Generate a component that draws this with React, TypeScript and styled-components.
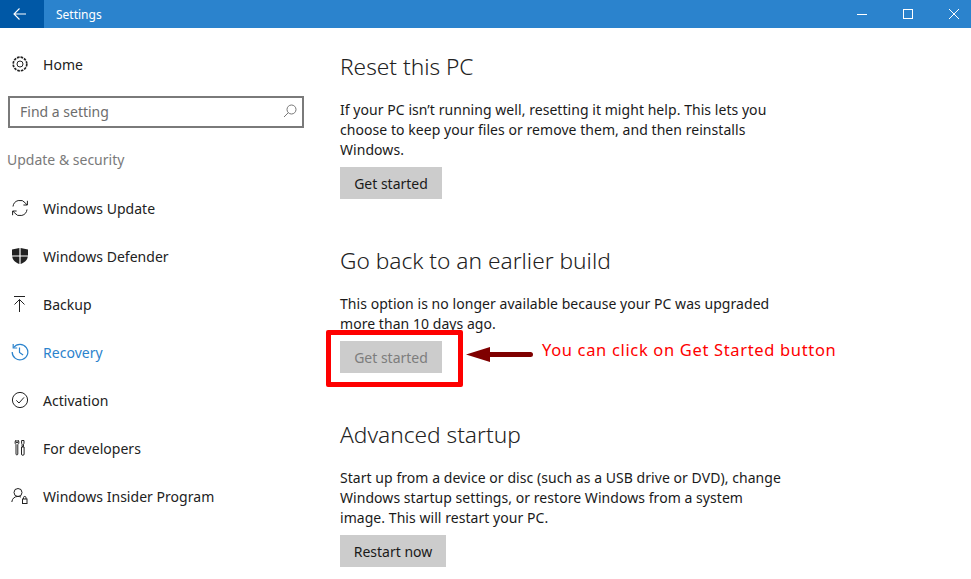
import React from "react";
import styled, { createGlobalStyle } from "styled-components";

const Global = createGlobalStyle`
  html, body { margin: 0; padding: 0; background: #fff; }
  body { font-family: "Noto Sans", "Open Sans", "Liberation Sans", sans-serif; color: #000; }
`;

const Page = styled.div`
  position: relative;
  width: 971px;
  height: 579px;
  overflow: hidden;
  background: #fff;
`;
const TitleBar = styled.header`
  display: flex;
  align-items: center;
  height: 28px;
  margin-right: -6px;
  background: #2b83cd;
  color: #fff;
`;
const BackButton = styled.div`
  box-sizing: border-box;
  width: 44px;
  height: 28px;
  padding: 0 4px 1px 0;
  background: #0058a6;
  display: flex;
  align-items: center;
  justify-content: center;
  margin-right: 12px;
`;
const Title = styled.span`
  font-size: 12px;
  flex: 1;
`;
const WindowButton = styled.div`
  width: 46px;
  height: 28px;
  display: flex;
  align-items: center;
  justify-content: center;
`;
const Body = styled.div`
  display: grid;
  grid-template-columns: 340px 1fr;
`;
const Sidebar = styled.nav`
  display: flex;
  flex-direction: column;
`;
const NavRow = styled.div<{ $active?: boolean }>`
  display: flex;
  align-items: center;
  height: 48px;
  padding-left: 11px;
  gap: 14px;
  font-size: 14px;
  letter-spacing: 0.03px;
  color: ${(p) => (p.$active ? "#2b83cd" : "#222")};
`;
const IconSlot = styled.svg`
  width: 18px;
  height: 18px;
  flex: none;
  fill: none;
  stroke: currentColor;
`;
const HomeRow = styled(NavRow)`
  margin-top: 12px;
`;
const SearchBox = styled.div`
  box-sizing: border-box;
  width: 296px;
  height: 32px;
  margin: 8px 0 0 8px;
  border: 2px solid #7a7a7a;
  display: flex;
  align-items: center;
  justify-content: space-between;
  padding: 0 5px 2px 10px;
  font-size: 14px;
  color: #6d6d6d;
`;
const SectionLabel = styled.div`
  margin: 23px 0 15px 7px;
  height: 18px;
  line-height: 18px;
  font-size: 14px;
  color: #7a7a7a;
`;
const Main = styled.main`
  display: flex;
  flex-direction: column;
`;
const Section = styled.section`
  display: flex;
  flex-direction: column;
  align-items: flex-start;
`;
const Heading = styled.h2<{ $top: number }>`
  margin: ${(p) => p.$top}px 0 14px;
  height: 38px;
  line-height: 38px;
  font-size: 22.7px;
  font-weight: 300;
  color: #222;
`;
const Para = styled.p`
  margin: 0 0 7px;
  font-size: 14px;
  line-height: 20px;
  letter-spacing: 0.05px;
  color: #1a1a1a;
`;
const Button = styled.div<{ $w: number; $disabled?: boolean }>`
  width: ${(p) => p.$w}px;
  height: 32px;
  display: flex;
  align-items: center;
  justify-content: center;
  background: #cccccc;
  font-size: 14px;
  color: ${(p) => (p.$disabled ? "#7d7d7d" : "#1a1a1a")};
`;
const RedBox = styled.div`
  position: absolute;
  box-sizing: border-box;
  left: 326px;
  top: 330px;
  width: 137px;
  height: 57px;
  border: 5px solid #fe0000;
  border-radius: 2px;
`;
const Arrow = styled.svg`
  position: absolute;
  left: 466px;
  top: 347px;
  width: 67px;
  height: 15px;
`;
const Note = styled.div`
  position: absolute;
  left: 542px;
  top: 338px;
  font-size: 16.5px;
  line-height: 24px;
  letter-spacing: 0.66px;
  color: #fe0000;
  white-space: nowrap;
`;

const Gear = () => (
  <IconSlot viewBox="0 0 18 18" strokeWidth="1">
    <circle cx="9" cy="9" r="3" />
    <circle cx="9" cy="9" r="6.800" strokeDasharray="2.600 1" strokeWidth="1.700" />
  </IconSlot>
);
const Sync = () => (
  <IconSlot viewBox="0 0 18 18" strokeWidth="1">
    <path d="M2 7.500A7 7 0 0 1 14.600 4.200L16 6" />
    <path d="M16.400 1.800V6h-4" />
    <path d="M16 10.500A7 7 0 0 1 3.400 13.800L2 12" />
    <path d="M1.600 16.200V12h4" />
  </IconSlot>
);
const Shield = () => (
  <IconSlot viewBox="0 0 18 18" stroke="none">
    <path fill="currentColor" stroke="none" d="M1 2.500 8.400 1v7.400H1zM9.600 1 17 2.500v5.900H9.600zM1.200 9.600h7.200V17C4.600 15.800 1.800 13.500 1.200 9.600zM9.600 9.600h7.200c-.6 3.900-3.400 6.200-7.200 7.400z" />
  </IconSlot>
);
const Upload = () => (
  <IconSlot viewBox="0 0 18 18" strokeWidth="1">
    <path d="M3 1.500h11" />
    <path d="M8.500 17V4.500M3.500 9.500l5-5 5 5" />
  </IconSlot>
);
const History = () => (
  <IconSlot viewBox="0 0 18 18" strokeWidth="1.200">
    <path d="M2.700 4.500A7.800 7.800 0 1 1 1.200 9" />
    <path d="M2.200 1v4h4" />
    <path d="M8.500 4.500V9.500l3.600 2.400" />
  </IconSlot>
);
const CheckCircle = () => (
  <IconSlot viewBox="0 0 18 18" strokeWidth="1">
    <circle cx="9" cy="9" r="7.600" />
    <path d="M5.300 9.400 8 12l5-5.600" />
  </IconSlot>
);
const Tools = () => (
  <IconSlot viewBox="0 0 18 18" strokeWidth="1">
    <path d="M5 1.200v2.400h2V1.200C8.200 2 8.200 5 6.800 5.600V15a.9.9 0 0 1-1.800 0V5.600C3.800 5 3.800 2 5 1.200z" />
    <path d="M10.600 1.500h2.400v2.800l-.5.900v2.300h-1.400V5.200l-.5-.9zM10.500 8h2.600v7a1.300 1.300 0 0 1-2.600 0z" />
  </IconSlot>
);
const Insider = () => (
  <IconSlot viewBox="0 0 18 18" strokeWidth="1">
    <circle cx="7" cy="5.500" r="4" />
    <path d="M.8 15c.4-3.500 2.800-5.600 6.200-5.600 1.200 0 2.200.3 3 .7" />
    <rect x="11.500" y="12" width="4.500" height="4.500" />
    <path d="M12.500 12v-1.300a1.200 1.200 0 0 1 2.500 0V12" />
  </IconSlot>
);

const items: { label: string; icon: React.ReactNode; active?: boolean }[] = [
  { label: "Windows Update", icon: <Sync /> },
  { label: "Windows Defender", icon: <Shield /> },
  { label: "Backup", icon: <Upload /> },
  { label: "Recovery", icon: <History />, active: true },
  { label: "Activation", icon: <CheckCircle /> },
  { label: "For developers", icon: <Tools /> },
  { label: "Windows Insider Program", icon: <Insider /> },
];

export default function App() {
  return (
    <Page>
      <Global />
      <TitleBar>
        <BackButton>
          <svg width="14" height="14" viewBox="0 0 14 14" fill="none" stroke="#fff" strokeWidth="1.100">
            <path d="M13 7H1M6.500 1.500 1 7l5.500 5.500" />
          </svg>
        </BackButton>
        <Title>Settings</Title>
        <WindowButton>
          <svg width="10" height="10" viewBox="0 0 10 10" stroke="#fff" strokeWidth="1"><path d="M0 5.500h10" /></svg>
        </WindowButton>
        <WindowButton>
          <svg width="10" height="10" viewBox="0 0 10 10" fill="none" stroke="#fff" strokeWidth="1"><rect x=".5" y=".5" width="9" height="9" /></svg>
        </WindowButton>
        <WindowButton>
          <svg width="10" height="10" viewBox="0 0 10 10" stroke="#fff" strokeWidth="1"><path d="M0 0l10 10M10 0 0 10" /></svg>
        </WindowButton>
      </TitleBar>
      <Body>
        <Sidebar>
          <HomeRow><Gear />Home</HomeRow>
          <SearchBox>
            Find a setting
            <svg width="14" height="14" viewBox="0 0 14 14" fill="none" stroke="#777" strokeWidth="1">
              <circle cx="8.500" cy="5.500" r="4.500" />
              <path d="M5.300 8.700 1 13" />
            </svg>
          </SearchBox>
          <SectionLabel>Update &amp; security</SectionLabel>
          {items.map((it) => (
            <NavRow key={it.label} $active={it.active}>
              {it.icon}
              {it.label}
            </NavRow>
          ))}
        </Sidebar>
        <Main>
          <Section>
            <Heading $top={20}>Reset this PC</Heading>
            <Para>
              If your PC isn’t running well, resetting it might help. This lets you<br />
              choose to keep your files or remove them, and then reinstalls<br />
              Windows.
            </Para>
            <Button $w={102}>Get started</Button>
          </Section>
          <Section>
            <Heading $top={43}>Go back to an earlier build</Heading>
            <Para>
              This option is no longer available because your PC was upgraded<br />
              more than 10 days ago.
            </Para>
            <Button $w={102} $disabled>Get started</Button>
          </Section>
          <Section>
            <Heading $top={43}>Advanced startup</Heading>
            <Para>
              Start up from a device or disc (such as a USB drive or DVD), change<br />
              Windows startup settings, or restore Windows from a system<br />
              image. This will restart your PC.
            </Para>
            <Button $w={106}>Restart now</Button>
          </Section>
        </Main>
      </Body>
      <RedBox />
      <Arrow viewBox="0 0 67 15">
        <path d="M0 7.500 24 0v5H64.500a2.500 2.500 0 0 1 0 5H24v5z" fill="#7f0000" />
      </Arrow>
      <Note>You can click on Get Started button</Note>
    </Page>
  );
}
